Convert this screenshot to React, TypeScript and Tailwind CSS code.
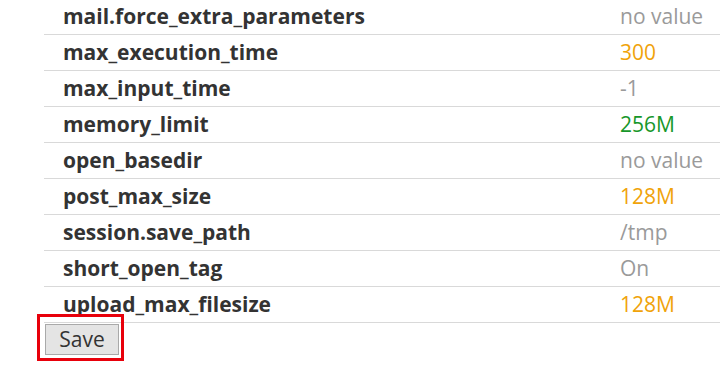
import React from 'react';

const rows: { name: string; value: string; tone: 'muted' | 'orange' | 'green' }[] = [
    { name: 'mail.force_extra_parameters', value: 'no value', tone: 'muted' },
    { name: 'max_execution_time', value: '300', tone: 'orange' },
    { name: 'max_input_time', value: '-1', tone: 'muted' },
    { name: 'memory_limit', value: '256M', tone: 'green' },
    { name: 'open_basedir', value: 'no value', tone: 'muted' },
    { name: 'post_max_size', value: '128M', tone: 'orange' },
    { name: 'session.save_path', value: '/tmp', tone: 'muted' },
    { name: 'short_open_tag', value: 'On', tone: 'muted' },
    { name: 'upload_max_filesize', value: '128M', tone: 'orange' },
];

const toneClass = {
    muted: 'text-[#9a9a9a]',
    orange: 'text-[#f0a30a]',
    green: 'text-[#17972a]',
};

export default function App() {
    return (
        <div className="w-[720px] h-[367px] bg-white overflow-hidden font-['Open_Sans',sans-serif]">
            <div className="ml-[44px] -mt-px">
                {rows.map((r) => (
                    <div key={r.name} className="flex items-center h-[36px] border-b border-[#d9d9d9]">
                        <div className="flex-1 pl-[19px] pt-px text-[21px] font-bold text-[#333333]">{r.name}</div>
                        <div className={`w-[100px] pt-px text-[21px] ${toneClass[r.tone]}`}>{r.value}</div>
                    </div>
                ))}
                {/* save */}
                <div className="relative inline-block ml-px mt-px">
                    <button className="w-[74px] h-[31px] flex items-center justify-center bg-[#e4e4e4] border border-[#a9a9a9] text-[21px] text-[#333333] leading-none">
                        Save
                    </button>
                    <div className="absolute left-[-8px] top-[-10px] right-[-5px] bottom-[-6px] border-[3px] border-[#e8000b] pointer-events-none"></div>
                </div>
            </div>
        </div>
    );
}
